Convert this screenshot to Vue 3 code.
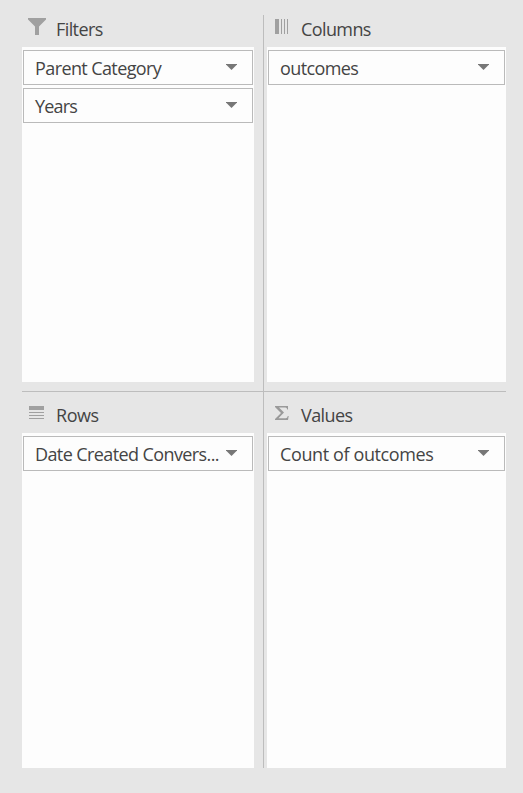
<script setup>
const areas = [
  { id: 'filters', title: 'Filters', fields: [{ name: 'Parent Category', cls: 'parent' }, { name: 'Years', cls: 'years' }] },
  { id: 'columns', title: 'Columns', fields: [{ name: 'outcomes', cls: 'outcomes' }] },
  { id: 'rows', title: 'Rows', fields: [{ name: 'Date Created Convers...', cls: 'date' }] },
  { id: 'values', title: 'Values', fields: [{ name: 'Count of outcomes', cls: 'count' }] },
]
</script>

<template>
  <main class="pane">
    <section v-for="area in areas" :key="area.id" class="area" :class="area.id">
      <header class="head">
        <svg class="icon" width="20" height="20" viewBox="0 0 20 20">
          <path v-if="area.id === 'filters'" d="M1 1H19V2.5L12 9.5V18H8V9.5L1 2.5Z" fill="#a0a0a0" />
          <path v-else-if="area.id === 'columns'" d="M3 2H7V17H3ZM9 2H10V17H9ZM12 2H13V17H12ZM15 2H16V17H15Z" fill="#a0a0a0" />
          <path v-else-if="area.id === 'rows'" d="M2 3H17V7H2ZM2 9H17V10H2ZM2 12H17V13H2ZM2 15H17V16H2Z" fill="#a0a0a0" />
          <path v-else d="M3 3H16V6.5H15.2Q15 4.4 13.4 4.4H7L12 9.5L6.5 15.2H13.6Q15.4 15.2 15.8 13H16.7L16 17H3V16L9 10L3 4Z" fill="#9a9a9a" />
        </svg>
        <h2 class="title">{{ area.title }}</h2>
      </header>
      <div class="drop">
        <button v-for="field in area.fields" :key="field.name" type="button" class="field">
          <span class="label" :class="field.cls">{{ field.name }}</span>
          <svg class="arrow" width="11" height="6" viewBox="0 0 11 6"><path d="M0 0H11V.5L5.5 6L0 .5Z" fill="#777" /></svg>
        </button>
      </div>
    </section>
  </main>
</template>

<style>
body { background: #e6e6e6; }
</style>

<style scoped>
.pane {
  box-sizing: border-box;
  width: 523px;
  height: 793px;
  padding: 15px 17px 25px 22px;
  display: grid;
  grid-template-columns: 242px 242px;
  grid-template-rows: 377px 376px;
  background: #e6e6e6;
  color: #444;
  font-family: "Open Sans", "Noto Sans", sans-serif;
}
.area {
  box-sizing: border-box;
  display: flex;
  flex-direction: column;
  min-width: 0;
}
.filters, .rows { padding-right: 9px; border-right: 1px solid #bdbdbd; }
.columns, .values { padding-left: 3px; }
.filters, .columns { padding-bottom: 9px; border-bottom: 1px solid #bdbdbd; }
.rows, .values { padding-top: 9px; }
.head {
  flex: none;
  height: 32px;
  display: flex;
  align-items: flex-start;
  padding-left: 5px;
}
.icon { flex: none; margin-top: 2px; }
.title {
  margin: 2px 0 0 9px;
  font-size: 18px;
  line-height: 25px;
  font-weight: 400;
  letter-spacing: -0.6px;
}
.rows .title { letter-spacing: -0.45px; }
.drop {
  flex: 1;
  padding: 3px 1px;
  display: flex;
  flex-direction: column;
  gap: 3px;
  background: #fdfdfd;
}
.field {
  box-sizing: border-box;
  flex: none;
  height: 35px;
  margin: 0;
  padding: 0 15px 0 11px;
  display: flex;
  align-items: flex-start;
  justify-content: space-between;
  border: 1px solid #bababa;
  border-radius: 0;
  background: #fdfdfd;
  color: inherit;
  font: inherit;
}
.label {
  min-width: 0;
  margin-top: 5px;
  font-size: 18px;
  line-height: 25px;
  letter-spacing: -0.6px;
  white-space: nowrap;
}
.years { letter-spacing: -0.8px; }
.count { letter-spacing: -0.38px; }
.arrow { flex: none; margin-top: 13px; }
</style>
